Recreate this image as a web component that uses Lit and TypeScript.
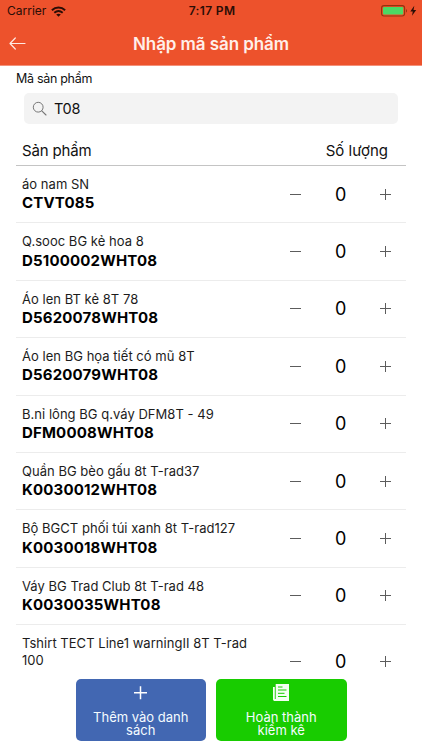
import { LitElement, html, css } from "lit";
import { customElement, property, state } from "lit/decorators.js";

interface Product {
  name: string;
  code: string;
  qty: number;
}

const minusIcon = html`<svg width="11" height="11" viewBox="0 0 11 11">
  <path d="M0 5.5H11" stroke="#5c5c5c" stroke-width="1" />
</svg>`;

const plusIcon = html`<svg width="11" height="11" viewBox="0 0 11 11">
  <path d="M0 5.5H11M5.5 0V11" stroke="#5c5c5c" stroke-width="1" />
</svg>`;

@customElement("status-bar")
class StatusBar extends LitElement {
  static styles = css`
    :host {
      display: flex;
      align-items: center;
      justify-content: space-between;
      height: 22px;
      padding: 0 5px 0 7px;
      color: #2a0d06;
      font-size: 12px;
      line-height: 22px;
    }
    .side {
      display: flex;
      align-items: center;
      flex: 1;
    }
    .wifi {
      margin-left: 5px;
    }
    .time {
      font-weight: 600;
      letter-spacing: 0.35px;
    }
    .right {
      justify-content: flex-end;
    }
  `;

  render() {
    return html`
      <div class="side">
        <span>Carrier</span>
        <svg class="wifi" width="15" height="11" viewBox="0 0 15 11">
          <path d="M0.9 4.2C4.7 0.6 10.3 0.6 14.1 4.2" fill="none" stroke="currentColor" stroke-width="2" />
          <path d="M3.3 6.8C5.8 4.6 9.2 4.6 11.7 6.8" fill="none" stroke="currentColor" stroke-width="1.9" />
          <path d="M5.2 8.5C6.6 7.4 8.4 7.4 9.8 8.5L7.5 10.8Z" fill="currentColor" />
        </svg>
      </div>
      <span class="time">7:17 PM</span>
      <div class="side right">
        <svg width="36" height="12" viewBox="0 0 36 12">
          <rect x="0.6" y="0.6" width="23" height="10.4" rx="2.4" fill="none" stroke="#94330f" stroke-width="1.1" />
          <rect x="2" y="2" width="20.2" height="7.6" rx="1" fill="#4cd964" />
          <path d="M25 4C26.3 4.4 26.3 7.2 25 7.6Z" fill="#94330f" />
          <path d="M33.3 0.8L29.3 6.4H31.8L31 10.8L35.2 5H32.5Z" fill="#2a0d06" />
        </svg>
      </div>
    `;
  }
}

@customElement("product-row")
class ProductRow extends LitElement {
  @property({ attribute: false }) product!: Product;

  static styles = css`
    :host {
      display: flex;
      align-items: center;
      box-sizing: border-box;
      min-height: 57.4px;
      padding: 9px 14.5px 9px 6px;
      border-bottom: 1px solid #ececec;
    }
    .info {
      width: 236px;
      padding-top: 1px;
    }
    .name {
      font-size: 13px;
      line-height: 17.2px;
      letter-spacing: 0.03px;
      color: #1c1c1c;
    }
    .code {
      min-height: 20px;
      font-size: 15px;
      font-weight: 700;
      line-height: 20px;
      letter-spacing: 0.17px;
      color: #000;
    }
    .stepper {
      display: flex;
      flex: 1;
      align-items: center;
      justify-content: space-between;
      padding-left: 32px;
    }
    .button {
      display: flex;
      padding: 0;
      border: 0;
      background: none;
    }
    .qty {
      padding-top: 1px;
      font-size: 18px;
      line-height: 24px;
      color: #000;
    }
  `;

  private change(step: number) {
    this.dispatchEvent(new CustomEvent("quantity", { detail: step }));
  }

  render() {
    const { name, code, qty } = this.product;
    return html`
      <div class="info">
        <div class="name">${name}</div>
        <div class="code">${code}</div>
      </div>
      <div class="stepper">
        <button class="button" @click=${() => this.change(-1)}>${minusIcon}</button>
        <span class="qty">${qty}</span>
        <button class="button" @click=${() => this.change(1)}>${plusIcon}</button>
      </div>
    `;
  }
}

@customElement("app-root")
class AppRoot extends LitElement {
  @state() private products: Product[] = [
    { name: "áo nam SN", code: "CTVT085", qty: 0 },
    { name: "Q.sooc BG kẻ hoa 8", code: "D5100002WHT08", qty: 0 },
    { name: "Áo len BT kẻ 8T 78", code: "D5620078WHT08", qty: 0 },
    { name: "Áo len BG họa tiết có mũ 8T", code: "D5620079WHT08", qty: 0 },
    { name: "B.nỉ lông BG q.váy DFM8T - 49", code: "DFM0008WHT08", qty: 0 },
    { name: "Quần BG bèo gấu 8t T-rad37", code: "K0030012WHT08", qty: 0 },
    { name: "Bộ BGCT phối túi xanh 8t T-rad127", code: "K0030018WHT08", qty: 0 },
    { name: "Váy BG Trad Club 8t T-rad 48", code: "K0030035WHT08", qty: 0 },
    { name: "Tshirt TECT Line1 warningII 8T T-rad 100", code: "", qty: 0 },
  ];

  static styles = css`
    :host {
      display: flex;
      flex-direction: column;
      height: 750px;
      overflow: hidden;
      background: #fff;
      color: #111;
      font-family: Inter, "Liberation Sans", sans-serif;
    }
    .header {
      flex: none;
      height: 65px;
      background: #ed522c;
      border-bottom: 1px solid #f4917a;
    }
    .nav {
      display: grid;
      grid-template-columns: 34px 1fr 34px;
      align-items: center;
      height: 43px;
      color: #fff;
    }
    .back {
      margin-left: 9px;
    }
    .title {
      text-align: center;
      font-size: 17px;
      font-weight: 600;
      line-height: 24px;
      letter-spacing: -0.08px;
      color: #ffefe9;
    }
    .label {
      flex: none;
      margin: 4px 0 0 16px;
      font-size: 12.5px;
      line-height: 18px;
      letter-spacing: -0.3px;
    }
    .search {
      display: flex;
      flex: none;
      align-items: center;
      gap: 7px;
      height: 31px;
      margin: 5px 24px 0 24px;
      padding-left: 8px;
      border-radius: 5px;
      background: #f3f3f3;
      font-size: 14.5px;
      letter-spacing: -0.3px;
    }
    .columns {
      display: flex;
      flex: none;
      align-items: center;
      justify-content: space-between;
      height: 29px;
      margin: 12px 16px 0 16px;
      padding: 0 18px 0 6px;
      border-bottom: 1px solid #c4c4c4;
      font-size: 15px;
    }
    .product-heading {
      letter-spacing: -0.15px;
    }
    .list {
      flex: 1;
      min-height: 0;
      overflow: hidden;
      margin: 0 16px;
    }
    .footer {
      display: flex;
      flex: none;
      justify-content: center;
      gap: 10px;
      height: 71px;
      background: #fff;
    }
    .action {
      display: flex;
      flex-direction: column;
      align-items: center;
      box-sizing: border-box;
      width: 130.5px;
      height: 61.5px;
      padding: 4px 14px 0;
      border: 0;
      border-radius: 5px;
      color: #f4fbff;
      font: inherit;
      font-size: 13px;
      line-height: 13.5px;
    }
    .action-icon {
      flex: none;
      margin-bottom: 8.5px;
    }
    .line {
      display: block;
    }
    .blue {
      background: #4267b2;
    }
    .green {
      background: #18cc00;
    }
  `;

  private updateQty(index: number, step: number) {
    this.products = this.products.map((p, i) =>
      i === index ? { ...p, qty: Math.max(0, p.qty + step) } : p
    );
  }

  render() {
    return html`
      <div class="header">
        <status-bar></status-bar>
        <div class="nav">
          <svg class="back" width="17" height="13" viewBox="0 0 17 13">
            <path d="M16 6.5H1M6.3 1L1 6.5L6.3 12" fill="none" stroke="#ffe9e2" stroke-width="1.2" stroke-linecap="round" stroke-linejoin="round" />
          </svg>
          <div class="title">Nhập mã sản phẩm</div>
        </div>
      </div>
      <div class="label">Mã sản phẩm</div>
      <div class="search">
        <svg width="15" height="15" viewBox="0 0 15 15">
          <circle cx="6.2" cy="6.2" r="4.9" fill="none" stroke="#777" stroke-width="1" />
          <path d="M9.8 9.8L14 14" stroke="#777" stroke-width="1.1" stroke-linecap="round" />
        </svg>
        <span>T08</span>
      </div>
      <div class="columns"><span class="product-heading">Sản phẩm</span><span>Số lượng</span></div>
      <div class="list">
        ${this.products.map(
          (p, i) => html`<product-row
            .product=${p}
            @quantity=${(e: CustomEvent<number>) => this.updateQty(i, e.detail)}
          ></product-row>`
        )}
      </div>
      <div class="footer">
        <button class="action blue">
          <svg class="action-icon" width="19" height="19" viewBox="0 0 19 19">
            <path d="M3 9.8H16M9.5 3.3V16.3" stroke="#fff" stroke-width="1.5" />
          </svg>
          <span class="line">Thêm vào danh</span>
          <span class="line">sách</span>
        </button>
        <button class="action green">
          <svg class="action-icon" width="19" height="19" viewBox="0 0 19 19">
            <path d="M3.7 1H17V18H3C1.8 18 1 17.4 1 16.2V4H2.8V16H3.7Z" fill="#f4fff2" />
            <path d="M6 4H10.5M6 7H14.5M6 10.3H12.5M6 13.5H14.5" stroke="#18cc00" stroke-width="1" />
          </svg>
          <span class="line">Hoàn thành</span>
          <span class="line">kiểm kê</span>
        </button>
      </div>
    `;
  }
}
